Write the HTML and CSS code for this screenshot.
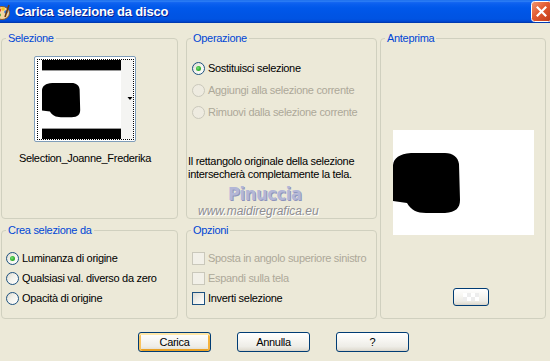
FILE: index.html
```html
<!DOCTYPE html>
<html>
<head>
<meta charset="utf-8">
<title>Carica selezione da disco</title>
<link rel="stylesheet" href="styles.css">
</head>
<body>
<div class="window">
  <div class="titlebar">
    <svg class="ticon" width="16" height="16" viewBox="0 0 16 16">
      <ellipse cx="8" cy="9" rx="7.5" ry="6.5" fill="#F2D7A2" stroke="#8A5A2A" stroke-width="1"/>
      <circle cx="5" cy="6" r="2" fill="#E2321E"/>
      <circle cx="9" cy="5" r="1.8" fill="#F6C21C"/>
      <circle cx="12" cy="8" r="1.8" fill="#2E7BE0"/>
      <circle cx="5" cy="11" r="1.8" fill="#3BA52E"/>
      <path d="M11 13 L15 1" stroke="#6B3A12" stroke-width="1.6"/>
    </svg>
    <span class="title">Carica selezione da disco</span>
    <svg class="close" width="21" height="21" viewBox="0 0 21 21">
      <defs>
        <linearGradient id="cg" x1="0" y1="0" x2="1" y2="1">
          <stop offset="0" stop-color="#F39A74"/>
          <stop offset="0.45" stop-color="#E25A31"/>
          <stop offset="1" stop-color="#C03A18"/>
        </linearGradient>
      </defs>
      <rect x="0.5" y="0.5" width="20" height="20" rx="3" fill="url(#cg)" stroke="#FFFFFF"/>
      <path d="M5.8 5.8 L15.2 15.2 M15.2 5.8 L5.8 15.2" stroke="#FFFFFF" stroke-width="2.2"/>
    </svg>
  </div>

  <div class="grid">
    <fieldset class="grp g-sel">
      <legend class="lg">Selezione</legend>
      <div class="sel-body">
        <div class="thumb">
          <div class="thumb-in">
            <svg width="95" height="79" viewBox="0 0 95 79">
              <rect x="0" y="0" width="83" height="79" fill="#FFFFFF"/>
              <rect x="83" y="0" width="12" height="79" fill="#F4F4F2"/>
              <rect x="4" y="0" width="79" height="10" fill="#000"/>
              <rect x="4" y="10" width="79" height="1" fill="#9A9A9A"/>
              <rect x="4" y="68" width="79" height="1" fill="#9A9A9A"/>
              <rect x="4" y="69" width="79" height="10" fill="#000"/>
              <path transform="translate(4,10) scale(0.57)" d="M0,35 C1,28 6,24 18,23 L52,23 C60,23 65,27 66,34 L67,70 C67,78 63,82 52,83 L33,83 C24,83 18,80 14,73 L0,71 Z" fill="#000"/>
              <path d="M89.5,37 L94.5,37 L92,40 Z" fill="#000"/>
            </svg>
          </div>
        </div>
        <div class="fname">Selection_Joanne_Frederika</div>
      </div>
    </fieldset>

    <fieldset class="grp g-op">
      <legend class="lg">Operazione</legend>
      <div class="list op-list">
        <div class="row r22"><span class="radio on"></span><span>Sostituisci selezione</span></div>
        <div class="row r22 dis"><span class="radio"></span><span>Aggiungi alla selezione corrente</span></div>
        <div class="row r22 dis"><span class="radio"></span><span>Rimuovi dalla selezione corrente</span></div>
      </div>
      <div class="desc">Il rettangolo originale della selezione<br>intersecherà completamente la tela.</div>
    </fieldset>

    <fieldset class="grp g-pv">
      <legend class="lg">Anteprima</legend>
      <div class="pv">
        <svg width="141" height="105" viewBox="0 0 141 105">
          <path d="M0,35 C1,28 6,24 18,23 L52,23 C60,23 65,27 66,34 L67,70 C67,78 63,82 52,83 L33,83 C24,83 18,80 14,73 L0,71 Z" fill="#000"/>
        </svg>
      </div>
      <button class="btn pvbtn"><span class="chk-pat"></span></button>
    </fieldset>

    <fieldset class="grp g-crea">
      <legend class="lg">Crea selezione da</legend>
      <div class="list crea-list">
        <div class="row"><span class="radio on"></span><span>Luminanza di origine</span></div>
        <div class="row"><span class="radio"></span><span>Qualsiasi val. diverso da zero</span></div>
        <div class="row"><span class="radio"></span><span>Opacità di origine</span></div>
      </div>
    </fieldset>

    <fieldset class="grp g-opz">
      <legend class="lg">Opzioni</legend>
      <div class="list opz-list">
        <div class="row dis"><span class="chk"></span><span>Sposta in angolo superiore sinistro</span></div>
        <div class="row dis"><span class="chk"></span><span>Espandi sulla tela</span></div>
        <div class="row"><span class="chk"></span><span>Inverti selezione</span></div>
      </div>
    </fieldset>
  </div>

  <div class="btns">
    <button class="btn main def">Carica</button>
    <button class="btn main">Annulla</button>
    <button class="btn main">?</button>
  </div>

  <div class="wm">
    <div class="wm1">Pinuccia</div>
    <div class="wm2">www.maidiregrafica.eu</div>
  </div>
</div>
</body>
</html>
```

FILE: styles.css
```css
html, body {
  margin: 0;
  padding: 0;
  background: #ECE9D8;
}

.window {
  position: relative;
  width: 550px;
  height: 361px;
  overflow: hidden;
  background: #ECE9D8;
  font-family: "Liberation Sans", Arial, sans-serif;
  font-size: 11px;
  letter-spacing: -0.3px;
  color: #000;
}

/* Title bar */
.titlebar {
  height: 23px;
  display: flex;
  align-items: center;
  background: linear-gradient(to bottom,
    #0A5CE8 0px, #3A8CF6 1px, #1668F2 2px, #0A5FEE 4px,
    #0058EA 8px, #0055E5 14px, #0053E2 19px, #004AD6 21px,
    #0040C4 22px, #00339E 23px);
}

.ticon {
  flex: none;
  margin-left: -6px;
}

.title {
  flex: 1;
  margin-left: 5px;
  font-family: "Liberation Sans", Arial, sans-serif;
  font-weight: bold;
  font-size: 13px;
  letter-spacing: -0.2px;
  line-height: 23px;
  color: #FFFFFF;
  text-shadow: 1px 1px 0 #0A1D8C;
}

.close {
  flex: none;
  margin-right: -2px;
}

/* Layout */
.grid {
  display: grid;
  grid-template-columns: 177px 8px 191px 3px 166px;
  grid-template-rows: 188px 4px 96px;
  margin: 8px 0 0 1px;
}

.grp {
  margin: 0;
  padding: 0;
  min-width: 0;
  border: 1px solid #D0D0BF;
  border-radius: 4px;
}

.lg {
  margin-left: 4px;
  padding: 0 2px;
  line-height: 14px;
  color: #0046D5;
}

.g-sel  { grid-column: 1; grid-row: 1; }
.g-op   { grid-column: 3; grid-row: 1; }
.g-pv   { grid-column: 5; grid-row: 1 / 4; }
.g-crea { grid-column: 1; grid-row: 3; }
.g-opz  { grid-column: 3; grid-row: 3; }

/* Selezione */
.sel-body {
  display: flex;
  flex-direction: column;
  align-items: center;
  padding-right: 9px;
}

.thumb {
  margin-top: 11px;
  width: 102px;
  height: 86px;
  box-sizing: border-box;
  border: 1px solid #7F9DB9;
  border-radius: 2px;
  background: #FFFFFF;
  padding: 2px 1px 1px 2px;
}

.thumb-in {
  width: 97px;
  height: 81px;
  box-sizing: border-box;
  border: 1px dotted #000;
}

.thumb-in svg, .pv svg {
  display: block;
}

.fname {
  margin-top: 10px;
  line-height: 13px;
}

/* Lists of radios / checks */
.row {
  display: flex;
  align-items: center;
  gap: 3px;
  height: 20px;
  white-space: nowrap;
}

.row.r22 { height: 22px; }

.row.dis { color: #ACA899; }

.op-list  { padding: 12px 0 0 5px; }
.crea-list { padding: 11px 0 0 4px; }
.opz-list { padding: 11px 0 0 5px; }

.radio {
  flex: none;
  width: 13px;
  height: 13px;
  box-sizing: border-box;
  border-radius: 50%;
  border: 1px solid #1C5180;
  background: linear-gradient(135deg, #DCD9CE 0%, #F3F2EC 45%, #FFFFFF 100%);
  display: flex;
  align-items: center;
  justify-content: center;
}

.radio.on::after {
  content: "";
  width: 5px;
  height: 5px;
  border-radius: 50%;
  background: radial-gradient(circle at 40% 40%, #7BE07B 0, #35B535 50%, #1E961E 100%);
}

.dis .radio {
  border-color: #CAC8BB;
  background: #EEEBE0;
}

.chk {
  flex: none;
  width: 13px;
  height: 13px;
  box-sizing: border-box;
  border: 1px solid #1C5180;
  background: linear-gradient(135deg, #DCDCD5 0%, #F0EFEA 50%, #FFFFFF 100%);
}

.dis .chk {
  border-color: #CAC8BB;
  background: #F2F0E8;
}

.desc {
  margin: 32px 0 0 1px;
  line-height: 13px;
  white-space: nowrap;
}

/* Buttons */
.btn {
  box-sizing: border-box;
  padding: 0;
  margin: 0;
  border: 1px solid #003C74;
  border-radius: 3px;
  background: linear-gradient(to bottom, #FFFFFF 0%, #F7F6F2 40%, #EEEDE7 75%, #E2DFD5 92%, #D6D0C5 100%);
  font-family: inherit;
  font-size: 11px;
  letter-spacing: inherit;
  color: #000;
  display: flex;
  align-items: center;
  justify-content: center;
}

.btns {
  display: flex;
  justify-content: center;
  gap: 26px;
  margin-top: 13px;
  padding-right: 3px;
}

.btn.main {
  width: 73px;
  height: 20px;
}

.btn.def {
  box-shadow:
    inset 0 2px 0 #FFE7A8,
    inset 2px 0 0 #F9C35E,
    inset -2px 0 0 #F5B33E,
    inset 0 -2px 0 #E9A226;
}

/* Anteprima */
.pv {
  margin: 85px 0 0 12px;
  width: 141px;
  height: 105px;
  background: #FFFFFF;
}

.btn.pvbtn {
  margin: 53px 0 0 72px;
  width: 36px;
  height: 18px;
}

.chk-pat {
  width: 16px;
  height: 8px;
  background:
    conic-gradient(#EDEDED 25%, #FFFFFF 0 50%, #EDEDED 0 75%, #FFFFFF 0) 0 0 / 8px 8px;
}

/* Watermark overlay */
.wm {
  position: absolute;
  left: 198px;
  top: 185px;
  pointer-events: none;
}

.wm1 {
  margin-left: 30px;
  font-family: "DejaVu Sans Condensed", "DejaVu Sans", sans-serif;
  font-weight: bold;
  font-size: 18px;
  line-height: 18px;
  color: #B3B7D6;
  text-shadow: 1px 1px 0 #8E94BC;
}

.wm2 {
  margin-top: 1px;
  font-family: "Liberation Sans", Arial, sans-serif;
  font-style: italic;
  font-size: 12px;
  line-height: 14px;
  letter-spacing: 0;
  color: #8D8D92;
  text-shadow: 1px 1px 0 #FFFFFF;
}
```
